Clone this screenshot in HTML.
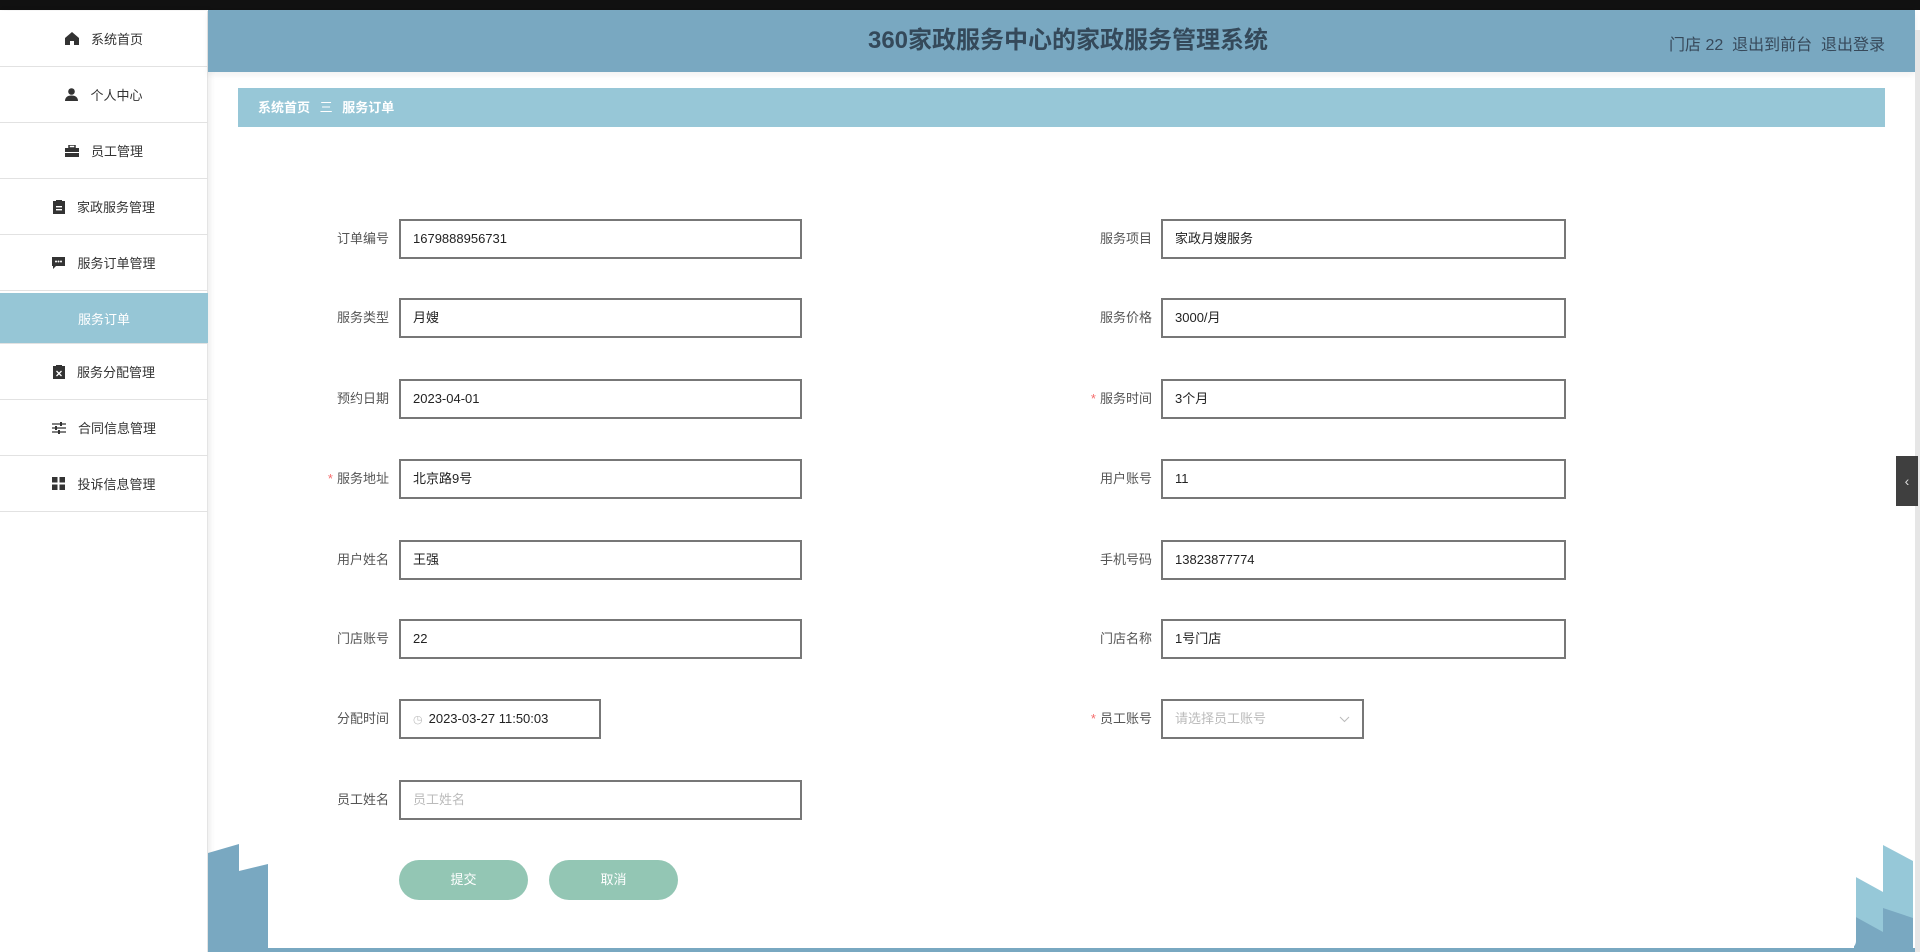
<!DOCTYPE html>
<html><head><meta charset="utf-8"><style>
*{margin:0;padding:0;box-sizing:border-box}
body{width:1920px;height:952px;overflow:hidden;background:#fff;position:relative;font-family:"Liberation Sans","Noto Sans CJK SC",sans-serif;}
.abs{position:absolute}
.topbar{left:0;top:0;width:1920px;height:10px;background:#111}
.side{left:0;top:11px;width:208px;height:941px;background:#fff;border-right:1px solid #e4e4e4;box-shadow:2px 0 6px rgba(0,0,0,.08)}
.item{position:absolute;left:0;width:208px;height:56px;border-bottom:1px solid #e2e2e2;display:flex;align-items:center;justify-content:center;font-size:13px;color:#333}
.item svg{margin-right:12px}
.item.act{background:#96c6d6;color:#fff}
.hdr{left:208px;top:10px;width:1707px;height:62px;background:#79a8c1;box-shadow:0 3px 6px rgba(0,0,0,.06)}
.title{left:368px;top:10px;width:1400px;height:62px;line-height:62px;text-align:center;font-size:24px;font-weight:bold;color:#34495a}
.rt{left:1669px;top:31px;font-size:16px;color:#37495a;white-space:nowrap}
.bc{left:238px;top:88px;width:1647px;height:39px;background:#97c7d7;color:#fff;font-size:13px;font-weight:bold;line-height:39px;padding-left:20px}
.lbl{position:absolute;font-size:13px;color:#555;text-align:right;width:120px;height:40px;line-height:40px}
.lbl i{color:#f56c6c;font-style:normal;margin-right:4px}
.inp{position:absolute;height:40px;border:2px solid #777;font-size:13px;color:#222;line-height:36px;padding-left:12px;background:#fff}
.ph{color:#bbb}
.btn{position:absolute;top:860px;width:129px;height:40px;border-radius:20px;background:#93c6b4;color:#fff;font-size:13px;text-align:center;line-height:40px}
</style></head><body>
<div class="abs topbar"></div>
<div class="abs side">
<div class="item" style="top:0"><svg width="14" height="13" viewBox="0 0 14 13"><path d="M7 0L0 6v7h5V9h4v4h5V6z" fill="#333"/></svg>系统首页</div>
<div class="item" style="top:56px"><svg width="13" height="13" viewBox="0 0 13 13"><circle cx="6.5" cy="3.5" r="3.3" fill="#333"/><path d="M0 13c0-4 3-5.5 6.5-5.5S13 9 13 13z" fill="#333"/></svg>个人中心</div>
<div class="item" style="top:112px"><svg width="14" height="12" viewBox="0 0 14 12"><rect x="4" y="0" width="6" height="3" fill="none" stroke="#333" stroke-width="1.5"/><rect x="0" y="3" width="14" height="4" fill="#333"/><rect x="0" y="8" width="14" height="4" fill="#333"/></svg>员工管理</div>
<div class="item" style="top:168px"><svg width="12" height="14" viewBox="0 0 12 14"><rect x="0" y="1" width="12" height="13" fill="#333"/><rect x="3" y="0" width="6" height="3" fill="#333"/><rect x="3" y="6" width="6" height="1.4" fill="#fff"/><rect x="3" y="9" width="6" height="1.4" fill="#fff"/></svg>家政服务管理</div>
<div class="item" style="top:224px"><svg width="13" height="12" viewBox="0 0 13 12"><path d="M0 0h13v9H4l-3 3V9H0z" fill="#333"/><circle cx="4" cy="4.5" r="1" fill="#fff"/><circle cx="6.5" cy="4.5" r="1" fill="#fff"/><circle cx="9" cy="4.5" r="1" fill="#fff"/></svg>服务订单管理</div>
<div class="item act" style="top:282px;height:51px">服务订单</div>
<div class="item" style="top:333px"><svg width="12" height="14" viewBox="0 0 12 14"><rect x="0" y="1" width="12" height="13" fill="#333"/><rect x="3" y="0" width="6" height="3" fill="#333"/><path d="M3.5 6l5 5M8.5 6l-5 5" stroke="#fff" stroke-width="1.3"/></svg>服务分配管理</div>
<div class="item" style="top:389px"><svg width="14" height="12" viewBox="0 0 14 12"><path d="M0 2h14M0 6h14M0 10h14" stroke="#333" stroke-width="1.3"/><rect x="8" y="0" width="2" height="4" fill="#333"/><rect x="3" y="4" width="2" height="4" fill="#333"/><rect x="6" y="8" width="2" height="4" fill="#333"/></svg>合同信息管理</div>
<div class="item" style="top:445px"><svg width="13" height="13" viewBox="0 0 13 13"><rect x="0" y="0" width="5.5" height="5.5" fill="#333"/><rect x="7.5" y="0" width="5.5" height="5.5" fill="#333"/><rect x="0" y="7.5" width="5.5" height="5.5" fill="#333"/><rect x="7.5" y="7.5" width="5.5" height="5.5" fill="#333"/></svg>投诉信息管理</div>
</div>
<div class="abs hdr"></div>
<div class="abs title">360家政服务中心的家政服务管理系统</div>
<div class="abs rt">门店 22&nbsp;&nbsp;退出到前台&nbsp;&nbsp;退出登录</div>
<div class="abs bc">系统首页 <span style="font-weight:normal;margin:0 6px">三</span> 服务订单</div>

<!-- bottom decorations -->
<svg class="abs" style="left:208px;top:840px" width="70" height="112"><polygon points="0,13 31,4 31,112 0,112" fill="#79a8c1"/><polygon points="31,31 60,24 60,112 31,112" fill="#79a8c1"/></svg>
<svg class="abs" style="left:1848px;top:820px" width="68" height="132"><polygon points="6,56 35,72 35,132 6,132" fill="#96c8d8"/><polygon points="35,25 65,41 65,132 35,132" fill="#96c8d8"/><polygon points="6,96 35,112 35,132 6,132" fill="#79a8c1"/><polygon points="35,88 65,98 65,132 35,132" fill="#79a8c1"/></svg>
<div class="abs" style="left:268px;top:870px;width:1588px;height:79px;background:#fff;border-bottom-left-radius:8px;border-bottom-right-radius:8px"></div>
<div class="abs" style="left:208px;top:948px;width:1708px;height:4px;background:#79a8c1"></div>
<div class="abs" style="left:1915px;top:30px;width:5px;height:922px;background:#e6e6e6"></div>
<div class="abs" style="left:1896px;top:456px;width:22px;height:50px;background:#3f3f3f;color:#ddd;font-size:14px;text-align:center;line-height:50px">‹</div>

<!-- left column -->
<div class="lbl" style="left:269px;top:219px">订单编号</div><div class="inp" style="left:399px;top:219px;width:403px">1679888956731</div>
<div class="lbl" style="left:269px;top:298px">服务类型</div><div class="inp" style="left:399px;top:298px;width:403px">月嫂</div>
<div class="lbl" style="left:269px;top:379px">预约日期</div><div class="inp" style="left:399px;top:379px;width:403px">2023-04-01</div>
<div class="lbl" style="left:269px;top:459px"><i>*</i>服务地址</div><div class="inp" style="left:399px;top:459px;width:403px">北京路9号</div>
<div class="lbl" style="left:269px;top:540px">用户姓名</div><div class="inp" style="left:399px;top:540px;width:403px">王强</div>
<div class="lbl" style="left:269px;top:619px">门店账号</div><div class="inp" style="left:399px;top:619px;width:403px">22</div>
<div class="lbl" style="left:269px;top:699px">分配时间</div><div class="inp" style="left:399px;top:699px;width:202px"><span style="color:#bbb;font-size:11px;margin-right:6px">◷</span>2023-03-27 11:50:03</div>
<div class="lbl" style="left:269px;top:780px">员工姓名</div><div class="inp ph" style="left:399px;top:780px;width:403px">员工姓名</div>

<!-- right column -->
<div class="lbl" style="left:1032px;top:219px">服务项目</div><div class="inp" style="left:1161px;top:219px;width:405px">家政月嫂服务</div>
<div class="lbl" style="left:1032px;top:298px">服务价格</div><div class="inp" style="left:1161px;top:298px;width:405px">3000/月</div>
<div class="lbl" style="left:1032px;top:379px"><i>*</i>服务时间</div><div class="inp" style="left:1161px;top:379px;width:405px">3个月</div>
<div class="lbl" style="left:1032px;top:459px">用户账号</div><div class="inp" style="left:1161px;top:459px;width:405px">11</div>
<div class="lbl" style="left:1032px;top:540px">手机号码</div><div class="inp" style="left:1161px;top:540px;width:405px">13823877774</div>
<div class="lbl" style="left:1032px;top:619px">门店名称</div><div class="inp" style="left:1161px;top:619px;width:405px">1号门店</div>
<div class="lbl" style="left:1032px;top:699px"><i>*</i>员工账号</div><div class="inp ph" style="left:1161px;top:699px;width:203px">请选择员工账号<svg style="position:absolute;right:12px;top:15px" width="11" height="7"><path d="M1 1l4.5 4.5L10 1" stroke="#bbb" fill="none"/></svg></div>

<div class="btn" style="left:399px">提交</div>
<div class="btn" style="left:549px">取消</div>
</body></html>
